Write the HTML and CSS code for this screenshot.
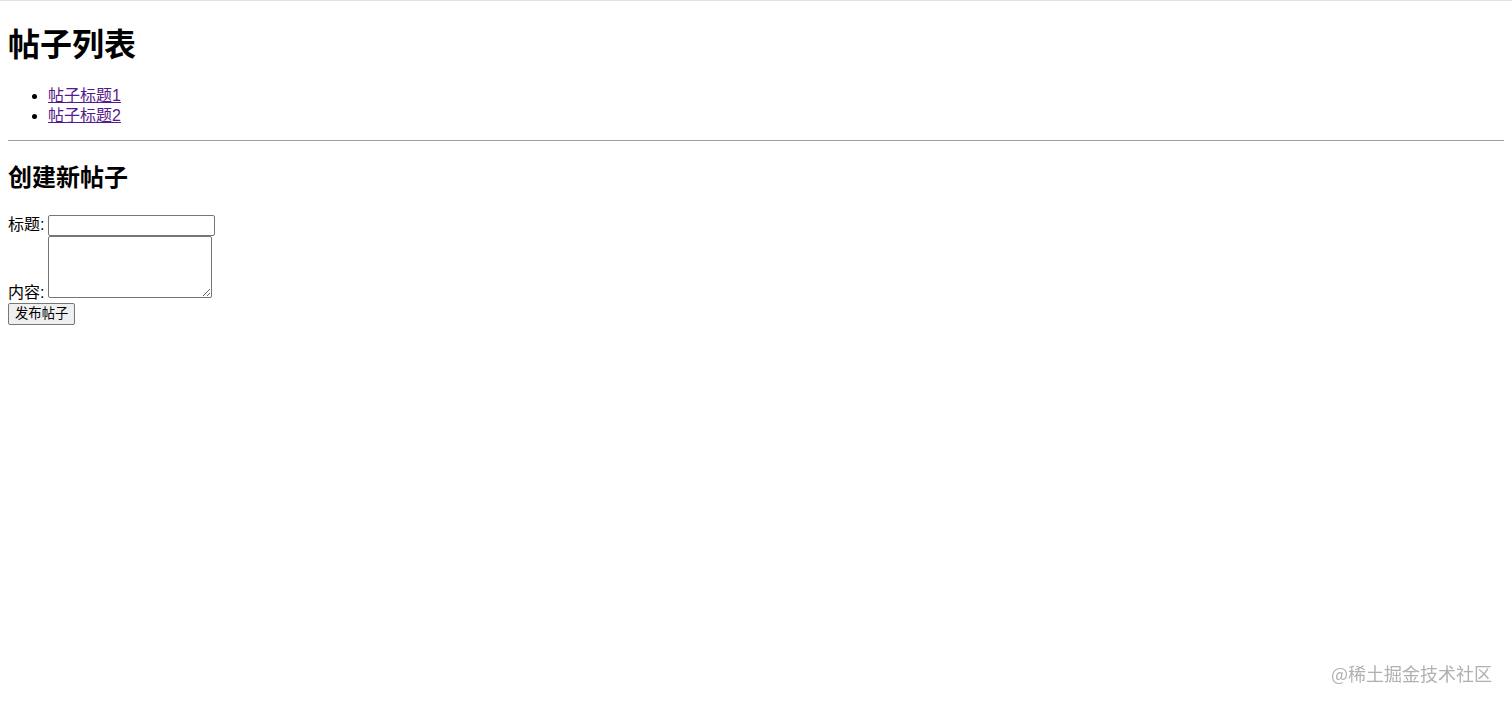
FILE: index.html
```html
<!DOCTYPE html>
<html lang="zh">
<head>
<meta charset="utf-8">
<title>帖子列表</title>
<link rel="stylesheet" href="styles.css">
</head>
<body>
<h1 class="title">帖子列表</h1>
<ul class="post-list">
  <li><a class="post-link" href="#">帖子标题1</a></li>
  <li><a class="post-link" href="#">帖子标题2</a></li>
</ul>
<hr class="divider">
<h2 class="subtitle">创建新帖子</h2>
<form class="post-form">
  <label class="field-label">标题:</label> <input class="title-input" type="text"><br>
  <label class="field-label">内容:</label> <textarea class="content-input"></textarea><br>
  <button class="submit-btn" type="button">发布帖子</button>
</form>
<div class="watermark">@稀土掘金技术社区</div>
</body>
</html>
```
FILE: styles.css
```css
html {
  border-top: 1px solid #e3e3e3;
}
body {
  margin: 8px;
  font-family: "Liberation Sans", "Noto Sans CJK SC", sans-serif;
  font-size: 16px;
  line-height: 20px;
  color: #000;
  background: #fff;
}
.title {
  font-size: 32px;
  line-height: 38px;
  margin: 17.44px 0 21.44px;
  font-weight: bold;
}
.post-list {
  margin: 16px 0 14px;
  padding-left: 40px;
}
.post-link {
  color: #551a8b;
}
.divider {
  margin: 8px 0;
  border: none;
  border-top: 1px solid #a0a0a0;
  height: 0;
}
.subtitle {
  font-size: 24px;
  line-height: 30px;
  margin: 21.92px 0 21.92px;
  font-weight: bold;
}
.post-form {
  margin: 0;
}
.field-label {
  font-size: 16px;
}
.title-input {
  box-sizing: border-box;
  width: 167px;
  height: 21px;
  margin: 0 0 0 -1px;
  border: 1px solid #767676;
  border-radius: 2px;
  padding: 1px 2px;
  font-size: 13.33px;
  vertical-align: baseline;
}
.content-input {
  box-sizing: border-box;
  width: 164px;
  height: 62px;
  margin: 0 0 0 -1px;
  border: 1px solid #767676;
  border-radius: 2px;
  padding: 2px;
  font-family: "Liberation Mono", monospace;
  font-size: 13.33px;
  vertical-align: baseline;
}
.submit-btn {
  box-sizing: border-box;
  height: 22px;
  padding: 1px 6px;
  margin: 0;
  font-family: "Liberation Sans", "Noto Sans CJK SC", sans-serif;
  font-size: 13.33px;
  line-height: 16px;
  background: #efefef;
  border: 1px solid #767676;
  border-radius: 2px;
  color: #000;
}
.watermark {
  position: fixed;
  right: 20px;
  bottom: 20px;
  font-family: "Noto Sans CJK SC", sans-serif;
  font-size: 18px;
  line-height: 24px;
  color: rgba(150, 150, 150, 0.75);
  letter-spacing: 0;
}
```
